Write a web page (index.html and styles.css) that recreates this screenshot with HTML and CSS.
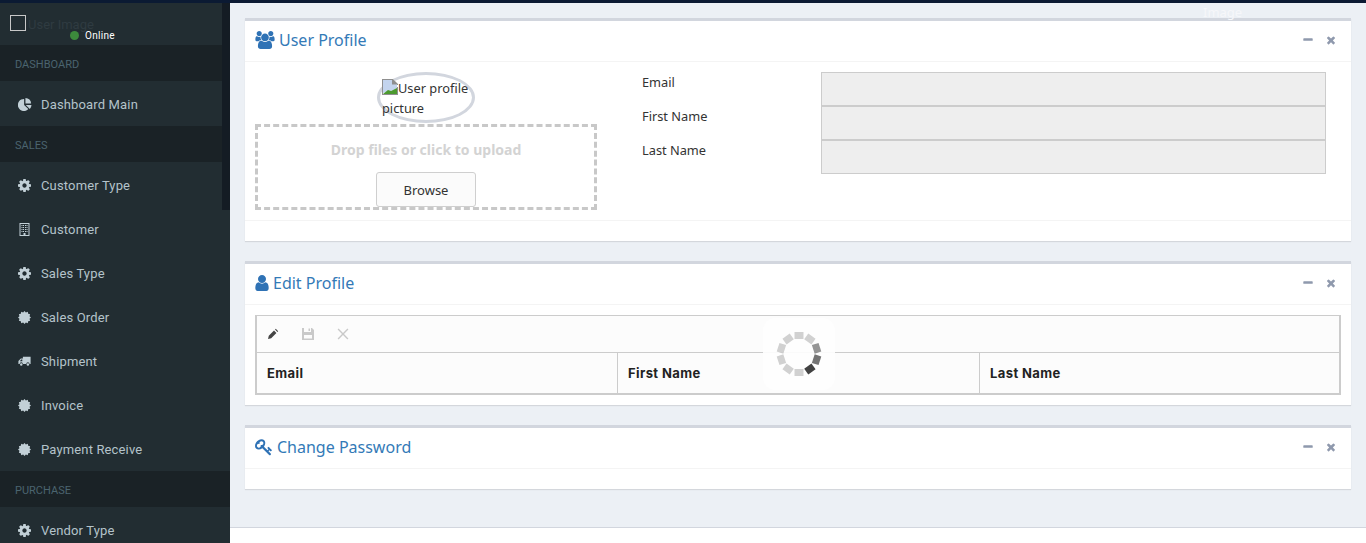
FILE: index.html
```html
<!DOCTYPE html>
<html lang="en">
<head>
<meta charset="utf-8">
<title>User Profile</title>
<link rel="stylesheet" href="styles.css">
</head>
<body>
<svg class="defs" width="0" height="0" aria-hidden="true">
  <symbol id="i-times" viewBox="0 0 1792 1792"><path d="M1490 1322q0 40-28 68l-136 136q-28 28-68 28t-68-28l-294-294-294 294q-28 28-68 28t-68-28l-136-136q-28-28-28-68t28-68l294-294-294-294q-28-28-28-68t28-68l136-136q28-28 68-28t68 28l294 294 294-294q28-28 68-28t68 28l136 136q28 28 28 68t-28 68l-294 294 294 294q28 28 28 68z"/></symbol>
  <symbol id="i-minus" viewBox="0 0 1792 1792"><path d="M1600 736v192q0 40-28 68t-68 28h-1216q-40 0-68-28t-28-68v-192q0-40 28-68t68-28h1216q40 0 68 28t28 68z"/></symbol>
  <symbol id="i-cog" viewBox="128 128 1536 1536"><path d="M1152 896q0-106-75-181t-181-75-181 75-75 181 75 181 181 75 181-75 75-181zm512-109v222q0 12-8 23t-20 13l-185 28q-19 54-39 91 35 50 107 138 10 12 10 25t-9 23q-27 37-99 108t-94 71q-12 0-26-9l-138-108q-44 23-91 38-16 136-29 186-7 28-36 28h-222q-14 0-24.500-8.500t-11.500-21.500l-28-184q-49-16-90-37l-141 107q-10 9-25 9-14 0-25-11-126-114-165-168-7-10-7-23 0-12 8-23 15-21 51-66.500t54-70.500q-27-50-41-99l-183-27q-13-2-21-12.500t-8-23.500v-222q0-12 8-23t19-13l186-28q14-46 39-92-40-57-107-138-10-12-10-24 0-10 9-23 26-36 98.500-107.500t94.500-71.500q13 0 26 10l138 107q44-23 91-38 16-136 29-186 7-28 36-28h222q14 0 24.500 8.500t11.500 21.500l28 184q49 16 90 37l142-107q9-9 24-9 13 0 25 10 129 119 165 170 7 8 7 22 0 12-8 23-15 21-51 66.500t-54 70.500q26 50 41 98l183 28q13 2 21 12.500t8 23.500z"/></symbol>
  <symbol id="i-user" viewBox="256 128 1280 1536"><path d="M1536 1399q0 109-62.500 187t-150.500 78h-854q-88 0-150.500-78t-62.500-187q0-85 8.500-160.500t31.500-152 58.500-131 94-89 134.500-34.500q131 128 313 128t313-128q76 0 134.500 34.500t94 89 58.500 131 31.500 152 8.500 160.500zm-256-887q0 159-112.500 271.500t-271.500 112.500-271.500-112.500-112.500-271.500 112.500-271.500 271.500-112.500 271.500 112.500 112.500 271.500z"/></symbol>
  <symbol id="i-key" viewBox="0 0 1792 1792"><path d="M832 512q0-80-56-136t-136-56-136 56-56 136q0 42 19 83-41-19-83-19-80 0-136 56t-56 136 56 136 136 56 136-56 56-136q0-42-19-83 41 19 83 19 80 0 136-56t56-136zm851 704q0 17-49 66t-66 49q-9 0-28.500-16t-36.500-33-38.500-40-24.500-26l-96 96 220 220q28 28 28 68 0 42-39 81t-81 39q-40 0-68-28l-671-671q-176 131-365 131-163 0-265.500-102.500t-102.500-265.500q0-160 95-313t248-248 313-95q163 0 265.500 102.500t102.500 265.500q0 189-131 365l355 355 96-96q-3-3-26-24.500t-40-38.500-33-36.500-16-28.500q0-17 49-66t66-49q13 0 23 10 6 6 46 44.500t82 79.500 86.500 86 73 78 28.500 41z"/></symbol>
  <symbol id="i-users" viewBox="0 0 1920 1792"><path d="M593 896q-162 5-265 128h-134q-82 0-138-40.500t-56-118.500q0-353 124-353 6 0 43.500 21t97.500 42.500 119 21.500q67 0 133-23-5 37-5 66 0 139 81 256zm1071 637q0 120-73 189.500t-194 69.500h-874q-121 0-194-69.500t-73-189.500q0-53 3.500-103.500t14-109 26.500-108.500 43-97.500 62-81 85.500-53.500 111.500-20q10 0 43 21.500t73 48 107 48 135 21.500 135-21.500 107-48 73-48 43-21.500q61 0 111.500 20t85.500 53.500 62 81 43 97.500 26.500 108.500 14 109 3.500 103.500zm-1024-1277q0 106-75 181t-181 75-181-75-75-181 75-181 181-75 181 75 75 181zm704 384q0 159-112.500 271.500t-271.500 112.500-271.500-112.500-112.500-271.500 112.500-271.500 271.500-112.500 271.500 112.500 112.500 271.500zm576 225q0 78-56 118.500t-138 40.500h-134q-103-123-265-128 81-117 81-256 0-29-5-66 66 23 133 23 59 0 119-21.500t97.500-42.500 43.500-21q124 0 124 353zm-128-609q0 106-75 181t-181 75-181-75-75-181 75-181 181-75 181 75 75 181z"/></symbol>
  <symbol id="i-pie" viewBox="0 0 16 16"><path d="M7 2.200V9l4.800 4.800A6.900 6.900 0 1 1 7 2.200z"/><path d="M8.500 1a6.500 6.500 0 0 1 6.500 6.500H8.500z"/><path d="M8.800 9h6.600a6.900 6.900 0 0 1-1.900 4.600z"/></symbol>
  <symbol id="i-building" viewBox="0 0 13 13"><path fill-rule="evenodd" d="M1.500 0h10v13h-10zM2.500 1v11h3V10h2v2h3V1zM3.500 2h1v1h-1zM5 2h1v1H5zM7 2h1v1H7zM8.500 2h1v1h-1zM3.500 4h1v1h-1zM5 4h1v1H5zM7 4h1v1H7zM8.500 4h1v1h-1zM3.500 6h1v1h-1zM5 6h1v1H5zM7 6h1v1H7zM8.500 6h1v1h-1zM3.500 8h1v1h-1zM5 8h1v1H5zM7 8h1v1H7zM8.500 8h1v1h-1z"/></symbol>
  <symbol id="i-cert" viewBox="0 0 16 16"><polygon points="16,8 14.180,9.660 14.930,12 12.530,12.530 12,14.930 9.660,14.180 8,16 6.340,14.180 4,14.930 3.470,12.530 1.070,12 1.820,9.660 0,8 1.820,6.340 1.070,4 3.470,3.470 4,1.070 6.340,1.820 8,0 9.660,1.820 12,1.070 12.530,3.470 14.930,4 14.180,6.340"/></symbol>
  <symbol id="i-truck" viewBox="0 -2 16 16"><path fill-rule="evenodd" d="M15.500 0v9h-1.300a2 2 0 0 0-4 0H6a2 2 0 0 0-4 0H.5V5.500L3.500 2.300H6V0zM2.300 5.700h3V3.500H4z"/><circle cx="4" cy="9.800" r="1.500"/><circle cx="12.200" cy="9.800" r="1.500"/></symbol>
  <symbol id="i-pencil" viewBox="0 0 12 12"><path d="M1 11l.8-3.200L7 2.600 9.400 5 4.200 10.200zM8 1.600l.8-.8 2.400 2.400-.8.800z"/></symbol>
  <symbol id="i-save" viewBox="0 0 12 12"><path fill-rule="evenodd" d="M0 0h2v4h7V0h1l2 2v10H0zM2 7v3.500h8V7z"/><path d="M6.500 .5h1.500V3H6.500z"/></symbol>
  <symbol id="i-x" viewBox="0 0 12 12"><path d="M1.600.6 6 5 10.400.6l1 1L7 6l4.400 4.400-1 1L6 7l-4.400 4.400-1-1L5 6 .6 1.600z"/></symbol>
  <symbol id="i-broken" viewBox="0 0 16 16"><path fill="#fff" d="M0 0h11l5 5v11H0z"/><path fill="#c3d4ee" d="M1 1h9.500L15 5.500V10L9 12 1 14z"/><path fill="#4c9a2e" d="M1 15l5-4 3 1 6-3v6z"/><path fill="#8f8f8f" d="M0 0h11l5 5v1h-1V5.500h-5V1H1v14h14V8h1v8H0z"/></symbol>
</svg>

<div class="topbar"></div>
<div class="app">
  <aside class="sidebar">
    <div class="user-panel">
      <span class="avatar-box"></span>
      <span class="avatar-alt">User Image</span>
      <span class="status"><i class="dot"></i>Online</span>
    </div>
    <div class="nav-head">DASHBOARD</div>
    <a class="nav-item"><svg class="nav-icon pie"><use href="#i-pie"/></svg>Dashboard Main</a>
    <div class="nav-head">SALES</div>
    <a class="nav-item"><svg class="nav-icon"><use href="#i-cog"/></svg>Customer Type</a>
    <a class="nav-item"><svg class="nav-icon"><use href="#i-building"/></svg>Customer</a>
    <a class="nav-item"><svg class="nav-icon"><use href="#i-cog"/></svg>Sales Type</a>
    <a class="nav-item"><svg class="nav-icon"><use href="#i-cert"/></svg>Sales Order</a>
    <a class="nav-item"><svg class="nav-icon"><use href="#i-truck"/></svg>Shipment</a>
    <a class="nav-item"><svg class="nav-icon"><use href="#i-cert"/></svg>Invoice</a>
    <a class="nav-item"><svg class="nav-icon"><use href="#i-cert"/></svg>Payment Receive</a>
    <div class="nav-head">PURCHASE</div>
    <a class="nav-item"><svg class="nav-icon"><use href="#i-cog"/></svg>Vendor Type</a>
    <div class="side-scroll"></div>
  </aside>

  <div class="content-wrap">
    <main class="content">
      <span class="header-alt">Image</span>

      <section class="panel">
        <header class="panel-head">
          <h2 class="panel-title"><svg class="title-icon wide"><use href="#i-users"/></svg>User Profile</h2>
          <div class="tools"><svg class="tool"><use href="#i-minus"/></svg><svg class="tool"><use href="#i-times"/></svg></div>
        </header>
        <div class="profile-body">
          <div class="profile-left">
            <div class="avatar">
              <svg class="broken"><use href="#i-broken"/></svg>User profile picture
            </div>
            <div class="dropzone">
              <div class="drop-text">Drop files or click to upload</div>
              <button class="browse" type="button">Browse</button>
            </div>
          </div>
          <div class="profile-form">
            <label class="form-label">Email</label><div class="form-input"></div>
            <label class="form-label">First Name</label><div class="form-input"></div>
            <label class="form-label">Last Name</label><div class="form-input"></div>
          </div>
        </div>
        <div class="panel-foot"></div>
      </section>

      <section class="panel">
        <header class="panel-head">
          <h2 class="panel-title"><svg class="title-icon narrow"><use href="#i-user"/></svg>Edit Profile</h2>
          <div class="tools"><svg class="tool"><use href="#i-minus"/></svg><svg class="tool"><use href="#i-times"/></svg></div>
        </header>
        <div class="grid-body">
          <div class="grid">
            <div class="grid-toolbar">
              <svg class="grid-tool on"><use href="#i-pencil"/></svg>
              <svg class="grid-tool"><use href="#i-save"/></svg>
              <svg class="grid-tool"><use href="#i-x"/></svg>
            </div>
            <div class="grid-cols">
              <div class="grid-col">Email</div>
              <div class="grid-col">First Name</div>
              <div class="grid-col">Last Name</div>
            </div>
            <div class="loader">
              <svg class="spinner" viewBox="-25 -25 50 50">
                <rect x="-4.500" y="-22" width="9" height="7" fill="#cdcdcd"/>
                <rect x="-4.500" y="-22" width="9" height="7" fill="#cdcdcd" transform="rotate(36)"/>
                <rect x="-4.500" y="-22" width="9" height="7" fill="#8a8a8a" transform="rotate(72)"/>
                <rect x="-4.500" y="-22" width="9" height="7" fill="#666" transform="rotate(108)"/>
                <rect x="-4.500" y="-22" width="9" height="7" fill="#2e2e2e" transform="rotate(144)"/>
                <rect x="-4.500" y="-22" width="9" height="7" fill="#cdcdcd" transform="rotate(180)"/>
                <rect x="-4.500" y="-22" width="9" height="7" fill="#cdcdcd" transform="rotate(216)"/>
                <rect x="-4.500" y="-22" width="9" height="7" fill="#cdcdcd" transform="rotate(252)"/>
                <rect x="-4.500" y="-22" width="9" height="7" fill="#cdcdcd" transform="rotate(288)"/>
                <rect x="-4.500" y="-22" width="9" height="7" fill="#cdcdcd" transform="rotate(324)"/>
              </svg>
            </div>
          </div>
        </div>
      </section>

      <section class="panel">
        <header class="panel-head">
          <h2 class="panel-title"><svg class="title-icon"><use href="#i-key"/></svg>Change Password</h2>
          <div class="tools"><svg class="tool"><use href="#i-minus"/></svg><svg class="tool"><use href="#i-times"/></svg></div>
        </header>
        <div class="panel-foot"></div>
      </section>
    </main>
    <footer class="page-foot"></footer>
  </div>
</div>
</body>
</html>
```

FILE: styles.css
```css
* { box-sizing: border-box; }
html, body { margin: 0; height: 543px; overflow: hidden; }
body { font-family: "Noto Sans", sans-serif; font-size: 13px; color: #333; background: #fff; }
.defs { position: absolute; }
.topbar { height: 3px; background: #0b1a33; }
.app { display: flex; height: 540px; }

.sidebar { position: relative; width: 230px; flex: none; background: #222d32; overflow: hidden; font-family: "Roboto", sans-serif; }
.user-panel { position: relative; height: 42px; background: #222d32; }
.avatar-box { position: absolute; left: 10px; top: 12px; width: 16px; height: 16px; border: 1px solid #c8c8c8; }
.avatar-alt { position: absolute; left: 28px; top: 14px; font-size: 13px; color: #2f3b41; }
.status { position: absolute; left: 70px; top: 27px; display: flex; align-items: center; gap: 6px; font-size: 10px; color: #fff; letter-spacing: .3px; }
.dot { width: 9px; height: 9px; border-radius: 50%; background: #3c8a3c; }
.nav-head { height: 36px; padding: 2px 15px 0; display: flex; align-items: center; font-size: 11px; color: #4b646f; background: #1a2226; margin-bottom: 1px; }
.nav-item { height: 44px; display: flex; align-items: center; padding-left: 18px; gap: 10px; font-size: 13px; letter-spacing: .15px; font-weight: 400; color: #b4c3ca; }
.nav-icon { width: 13px; height: 13px; fill: #c2d0d7; flex: none; overflow: visible; }
.nav-icon.pie { width: 14px; height: 14px; margin-right: -1px; }
.side-scroll { position: absolute; right: 0; top: 0; width: 8px; height: 207px; background: #141c24; }

.content-wrap { flex: 1; min-width: 0; display: flex; flex-direction: column; background: #ecf0f5; }
.content { position: relative; flex: 1; padding: 15px 15px 0; display: flex; flex-direction: column; gap: 20px; }
.header-alt { position: absolute; left: 973px; top: 0; font-size: 13px; color: #f6f7fa; }
.page-foot { height: 16px; background: #fff; border-top: 1px solid #d2d6de; }

.panel { background: #fff; border-top: 3px solid #d2d6de; box-shadow: 0 1px 1px rgba(0,0,0,.1); }
.panel-head { height: 41px; display: flex; align-items: center; justify-content: space-between; padding: 0 10px 3px; border-bottom: 1px solid #f4f4f4; }
.panel-title { margin: 0; display: flex; align-items: center; gap: 4px; font-size: 16px; font-weight: 400; color: #337ab7; }
.title-icon { width: 18px; height: 18px; fill: #2f72b5; }
.title-icon.wide { width: 20px; }
.title-icon.narrow { width: 14px; height: 16px; }
.tools { display: flex; gap: 11px; align-items: center; margin-right: 4px; }
.tool { width: 12px; height: 12px; fill: #8f99ad; }
.panel-foot { height: 20px; }

.profile-body { display: flex; height: 159px; padding: 10px 10px 0; border-bottom: 1px solid #f4f4f4; }
.profile-left { width: 342px; flex: none; display: flex; flex-direction: column; align-items: center; }
.avatar { width: 98px; height: 51px; padding: 3px 0 0 2px; border: 3px solid #d2d6de; border-radius: 50%; line-height: 20px; font-size: 12.800px; color: #333; }
.broken { width: 16px; height: 16px; vertical-align: -2px; }
.dropzone { width: 100%; height: 86px; margin-top: 1px; border: 3px dashed #c8c8c8; display: flex; flex-direction: column; align-items: center; padding-top: 13px; }
.drop-text { font-size: 14px; font-weight: 700; color: #d3d3d3; }
.browse { width: 100px; height: 35px; margin-top: 13px; background: #fbfbfb; border: 1px solid #cfcfcf; border-radius: 3px; font: 13px "Noto Sans", sans-serif; color: #333; }
.profile-form { margin-left: 45px; width: 684px; display: grid; grid-template-columns: 179px 505px; grid-auto-rows: 34px; font-size: 12.800px; }
.form-label { padding-top: 1px; line-height: 18px; }
.form-input { background: #eee; border: 1px solid #ccc; }

.grid-body { padding: 10px; }
.grid { position: relative; border: 2px solid #ccc; border-top-width: 1px; background: #fcfcfc; }
.grid-toolbar { height: 37px; display: flex; align-items: center; gap: 23px; padding-left: 10px; border-bottom: 1px solid #ccc; }
.grid-tool { width: 12px; height: 12px; fill: #c9c9c9; flex: none; }
.grid-tool.on { fill: #444; }
.grid-cols { display: grid; grid-template-columns: 360px 362px 1fr; height: 40px; font-family: "Inter", sans-serif; font-weight: 700; font-size: 13px; color: #222; }
.grid-col { display: flex; align-items: center; padding-left: 10px; border-left: 1px solid #ccc; letter-spacing: .4px; }
.grid-col:first-child { border-left: 0; }
.loader { position: absolute; left: 506px; top: 2px; width: 72px; height: 72px; border-radius: 12px; background: #fff; opacity: .9; display: flex; align-items: center; justify-content: center; }
.spinner { width: 50px; height: 50px; }
```
